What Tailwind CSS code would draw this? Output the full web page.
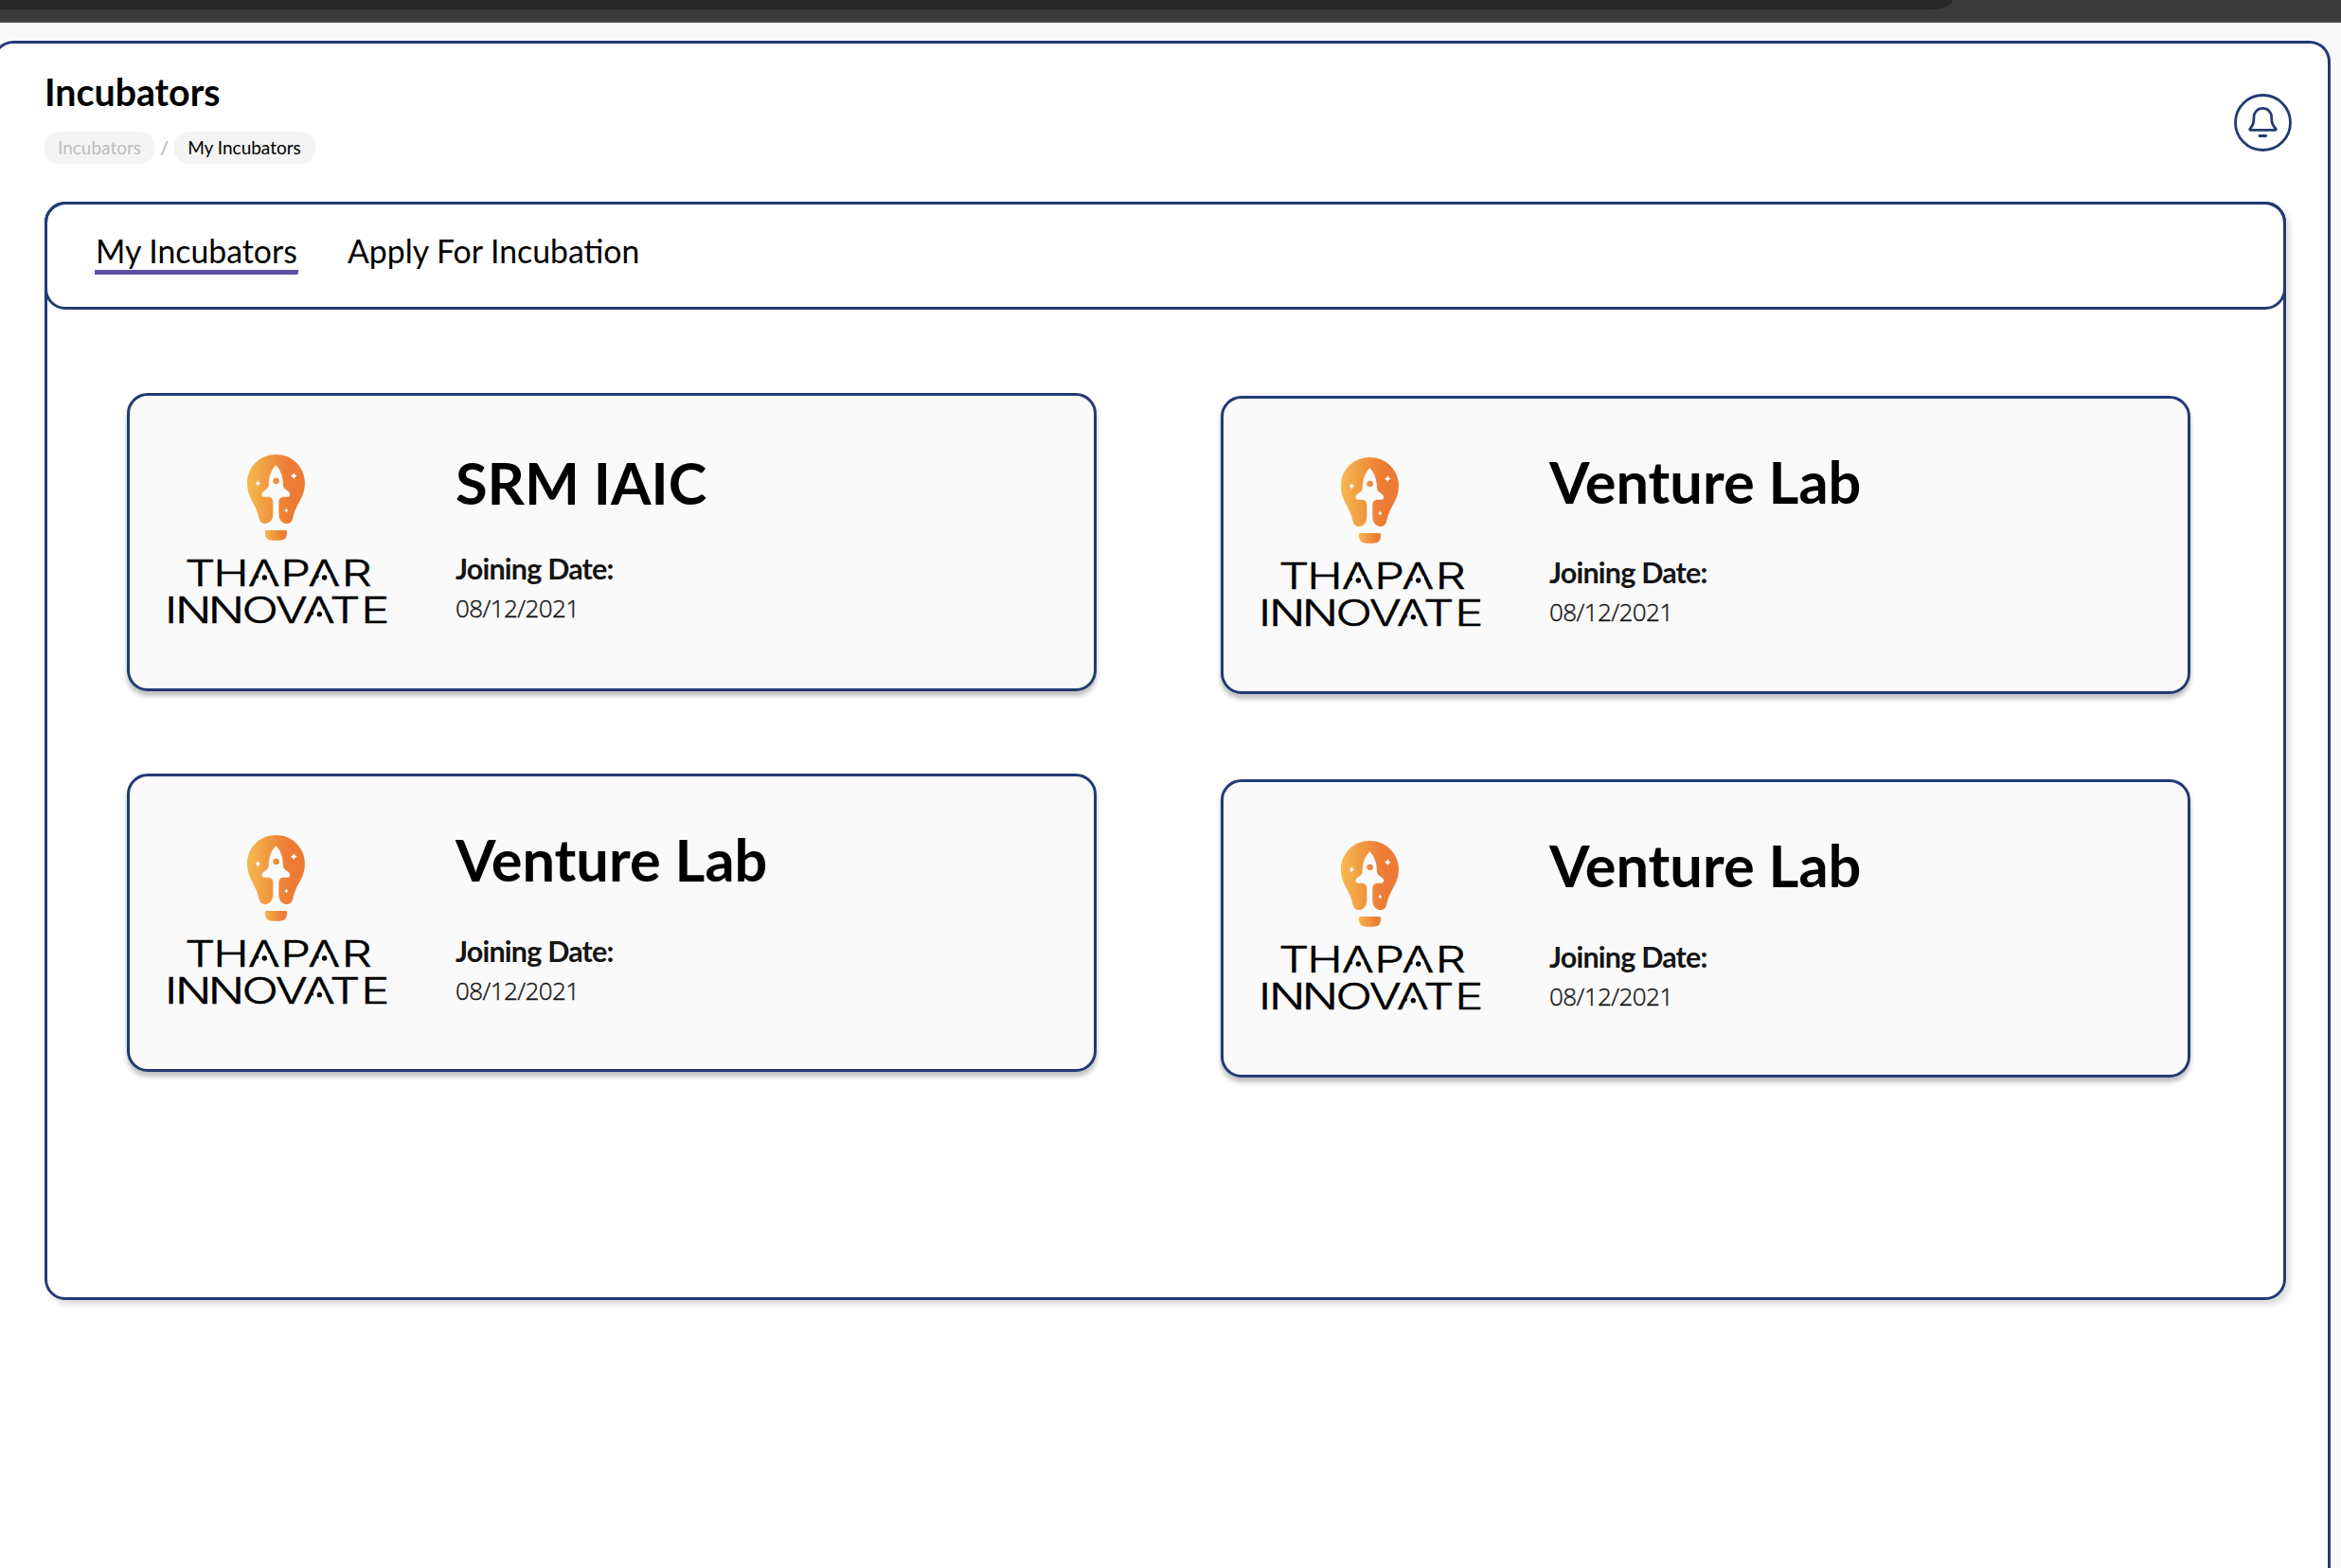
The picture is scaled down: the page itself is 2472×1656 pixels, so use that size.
<!DOCTYPE html>
<html lang="en">
<head>
<meta charset="utf-8">
<title>Incubators</title>
<script src="https://cdn.jsdelivr.net/npm/@tailwindcss/browser@4"></script>
</head>
<body class="h-[1656px] overflow-hidden bg-[#fafafa] font-['Lato',sans-serif] text-black">
<svg class="absolute size-0" aria-hidden="true">
  <defs>
    <linearGradient id="bulb" gradientUnits="userSpaceOnUse" x1="303" y1="0" x2="445" y2="0"><stop offset="0" stop-color="#f5b94e"/><stop offset=".85" stop-color="#ee8037"/><stop offset="1" stop-color="#ed7b35"/></linearGradient>
    <linearGradient id="base" gradientUnits="userSpaceOnUse" x1="360" y1="0" x2="415" y2="0"><stop offset="0" stop-color="#f5b54c"/><stop offset="1" stop-color="#ed7d35"/></linearGradient>
    <linearGradient id="port" gradientUnits="userSpaceOnUse" x1="384" y1="0" x2="404" y2="0"><stop offset="0" stop-color="#f0a040"/><stop offset="1" stop-color="#ed7d35"/></linearGradient>
    <symbol id="logo" viewBox="0 0 810 630">
      <path fill="url(#bulb)" d="M394 60C445 60 486 100 486 150C486 186 468 207 458 230C449 250 450 256 446 266C443 275 437 279 429 279C414 279 403 266 403 248V212C403 200 409 194 420 194H432C439 194 440 184 436 180C430 173 420 171 417 160C417 130 409 109 394 94C379 109 371 130 371 160C368 171 358 173 352 180C348 184 349 194 356 194H368C379 194 385 200 385 212V248C385 266 374 279 359 279C351 279 345 275 342 266C338 256 339 250 330 230C320 207 303 186 303 150C303 100 343 60 394 60Z"/>
      <circle cx="394.500" cy="144" r="10" fill="url(#port)"/>
      <path fill="#fafafa" d="M337 141Q339 149 346 151Q339 153 337 161Q335 153 328 151Q335 149 337 141ZM451 118Q453 126 461 128Q453 130 451 138Q449 130 441 128Q449 126 451 118ZM427 229Q428.500 235 433 237Q428.500 239 427 245Q425.500 239 421 237Q425.500 235 427 229Z"/>
      <path fill="url(#base)" d="M364 300H425Q429 300 429 304V310Q429 332 407 332H382Q360 332 360 310V304Q360 300 364 300Z"/>
      <g transform="scale(1.320 1)" font-family="Inter, sans-serif" font-size="115" font-weight="300" fill="#000" stroke="#000" stroke-width="1.500" stroke-linejoin="round">
        <text y="478.500" x="80 148.500 231 309.500 375.500 456">THAPAR</text>
        <text y="595.500" x="32 57 136 217 297 363 428 503">INNOVATE</text>
      </g>
      <path fill="#fafafa" d="M343 436h30l10 26h-50zM534 436h30l10 26h-50zM517 553h30l10 26h-50z"/>
      <circle cx="358" cy="450" r="8"/><circle cx="548" cy="450" r="8"/><circle cx="532" cy="566" r="8"/>
    </symbol>
  </defs>
</svg>

<div class="h-6 border-b-2 border-[#4a4a4a] bg-[#3b3b3b]">
  <div class="h-[10px] w-[2062px] rounded-br-[24px_10px] bg-[#272727]"></div>
</div>

<main class="mt-[19px] -ml-2 h-[1613px] w-[2469px] rounded-t-[22px] border-3 border-b-0 border-[#233b73] bg-white pl-[52px] pr-11">
  <header class="flex h-[167px] justify-between">
    <div class="pt-[28px]">
      <h1 class="text-[39.300px] leading-[45px] font-bold">Incubators</h1>
      <nav class="mt-[20px] flex items-center text-[19px] leading-[34px]">
        <span class="h-[34px] w-[116px] rounded-[15px] bg-[#f4f4f4] text-center text-[#bdbdbd]">Incubators</span>
        <span class="w-[21px] text-center text-[#a8a8a8]">/</span>
        <span class="h-[34px] w-[149px] rounded-[15px] bg-[#f4f4f4] pr-px text-center">My Incubators</span>
      </nav>
    </div>
    <button class="mt-[53px] mr-[-6px] size-[61px]" aria-label="Notifications">
      <svg class="size-[61px]" viewBox="957 297 183 183" fill="none" stroke="#233b73" stroke-width="8.500" stroke-linecap="round" stroke-linejoin="round">
        <circle cx="1048.500" cy="388.500" r="87"/>
        <path d="M1048 343C1032 343 1020 356 1020 371C1020 392 1016 397 1008 408Q1006 412 1009 412H1088Q1091 412 1089 408C1080 397 1076 392 1076 371C1076 356 1064 343 1048 343ZM1038 430.500H1058"/>
      </svg>
    </button>
  </header>

  <section class="h-[1160px] w-[2367px] rounded-[22px] border-3 border-[#233b73] bg-white shadow-[4px_5px_6px_rgba(0,0,0,0.14)]">
    <nav class="-mx-[3px] -mt-[3px] flex h-[114px] gap-[52px] rounded-[22px] border-3 border-[#233b73] pt-[29px] pl-[50px] text-[33.800px] leading-[40px]">
      <a class="h-[45px] w-[215px] rounded-r-[2px] border-b-5 border-[#5a52a3] pl-px whitespace-nowrap">My Incubators</a>
      <a class="whitespace-nowrap">Apply For Incubation</a>
    </nav>

    <div class="flex gap-[131px] pl-[84px]">
      <div class="flex flex-col gap-[87px] pt-[88px]">
        <article class="flex h-[315px] w-[1024px] rounded-[22px] border-3 border-[#233b73] bg-[#fafafa] shadow-[0_5px_5px_rgba(0,0,0,0.25)]">
          <svg class="mt-[42px] ml-[23px] h-[210px] w-[270px]"><use href="#logo"/></svg>
          <div class="pt-[61px] pl-[51px]">
            <h2 class="text-[61.300px] leading-[61px] font-bold">SRM IAIC</h2>
            <h3 class="mt-[45px] text-[30.500px] leading-[30px] font-bold tracking-[-0.8px] text-[#141414]">Joining Date:</h3>
            <p class="mt-[14px] font-['Open_Sans',sans-serif] text-[26px] leading-none font-light tracking-[-0.6px] text-[#141414] [-webkit-text-stroke:0.4px_#141414]">08/12/2021</p>
          </div>
        </article>
        <article class="flex h-[315px] w-[1024px] rounded-[22px] border-3 border-[#233b73] bg-[#fafafa] shadow-[0_5px_5px_rgba(0,0,0,0.25)]">
          <svg class="mt-[42px] ml-[23px] h-[210px] w-[270px]"><use href="#logo"/></svg>
          <div class="pt-[57px] pl-[51px]">
            <h2 class="text-[61.300px] leading-[61px] font-bold">Venture Lab</h2>
            <h3 class="mt-[51px] text-[30.500px] leading-[30px] font-bold tracking-[-0.8px] text-[#141414]">Joining Date:</h3>
            <p class="mt-[14px] font-['Open_Sans',sans-serif] text-[26px] leading-none font-light tracking-[-0.6px] text-[#141414] [-webkit-text-stroke:0.4px_#141414]">08/12/2021</p>
          </div>
        </article>
      </div>
      <div class="flex flex-col gap-[90px] pt-[91px]">
        <article class="flex h-[315px] w-[1024px] rounded-[22px] border-3 border-[#233b73] bg-[#fafafa] shadow-[0_5px_5px_rgba(0,0,0,0.25)]">
          <svg class="mt-[42px] ml-[23px] h-[210px] w-[270px]"><use href="#logo"/></svg>
          <div class="pt-[57px] pl-[51px]">
            <h2 class="text-[61.300px] leading-[61px] font-bold">Venture Lab</h2>
            <h3 class="mt-[50px] text-[30.500px] leading-[30px] font-bold tracking-[-0.8px] text-[#141414]">Joining Date:</h3>
            <p class="mt-[14px] font-['Open_Sans',sans-serif] text-[26px] leading-none font-light tracking-[-0.6px] text-[#141414] [-webkit-text-stroke:0.4px_#141414]">08/12/2021</p>
          </div>
        </article>
        <article class="flex h-[315px] w-[1024px] rounded-[22px] border-3 border-[#233b73] bg-[#fafafa] shadow-[0_5px_5px_rgba(0,0,0,0.25)]">
          <svg class="mt-[42px] ml-[23px] h-[210px] w-[270px]"><use href="#logo"/></svg>
          <div class="pt-[57px] pl-[51px]">
            <h2 class="text-[61.300px] leading-[61px] font-bold">Venture Lab</h2>
            <h3 class="mt-[51px] text-[30.500px] leading-[30px] font-bold tracking-[-0.8px] text-[#141414]">Joining Date:</h3>
            <p class="mt-[14px] font-['Open_Sans',sans-serif] text-[26px] leading-none font-light tracking-[-0.6px] text-[#141414] [-webkit-text-stroke:0.4px_#141414]">08/12/2021</p>
          </div>
        </article>
      </div>
    </div>
  </section>
</main>
</body>
</html>
